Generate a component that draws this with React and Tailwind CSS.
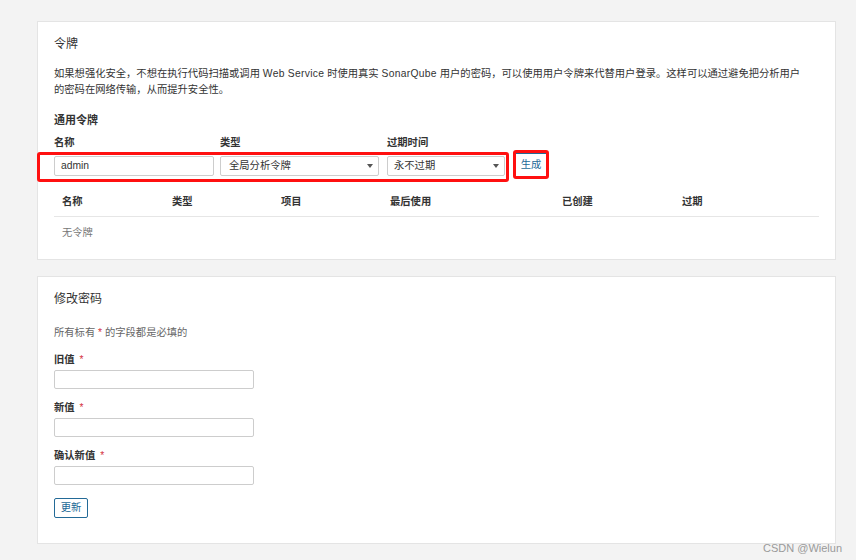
const font = { fontFamily: '"Liberation Sans", "Noto Sans CJK SC", sans-serif' };

function Caret() {
  return (
    <span className="ml-auto mr-[5px] h-0 w-0 border-x-[3px] border-t-[4px] border-x-transparent border-t-[#555]" />
  );
}

function Field({ label }) {
  return (
    <div className="mt-[12px]">
      <div className="font-bold leading-[14px] text-[#333]">
        {label}
        <span className="ml-[5px] font-normal text-[#d4333f]">*</span>
      </div>
      <div className="mt-[3px] h-[19px] w-[200px] rounded-[2px] border border-[#cdcdcd] bg-white" />
    </div>
  );
}

export default function App() {
  const cols = ['名称', '类型', '项目', '最后使用', '已创建', '过期'];
  return (
    <div
      style={font}
      className="relative min-h-[560px] bg-[#f3f3f3] pl-[37px] pr-[20px] pt-[21px] text-[10.3px] text-[#333]"
    >
      {/* token card */}
      <div className="border border-[#e4e4e4] bg-white px-4 pb-[19px] pt-[14px]">
        <h2 className="text-[12px] leading-[16px] text-[#333]">令牌</h2>
        <p className="mt-[14px] leading-[16px]">
          如果想强化安全，不想在执行代码扫描或调用 <span className="tracking-[0.3px]">Web Service</span> 时使用真实{' '}
          <span className="tracking-[0.3px]">SonarQube</span> 用户的密码，可以使用用户令牌来代替用户登录。这样可以通过避免把分析用户
          <br />
          的密码在网络传输，从而提升安全性。
        </p>
        <h3 className="mt-[14px] text-[11px] font-bold leading-[16px]">通用令牌</h3>

        <div className="mt-[8px] flex items-end">
          <div className="w-[160px]">
            <div className="font-bold leading-[14px]">名称</div>
            <div className="mt-[6px] flex h-[20px] items-center rounded-[2px] border border-[#cdcdcd] pl-[6px]">
              admin
            </div>
          </div>
          <div className="ml-[6px] w-[159px]">
            <div className="font-bold leading-[14px]">类型</div>
            <div className="mt-[6px] flex h-[20px] items-center rounded-[2px] border border-[#cdcdcd] pl-[8px]">
              全局分析令牌
              <Caret />
            </div>
          </div>
          <div className="ml-[8px] w-[118px]">
            <div className="font-bold leading-[14px]">过期时间</div>
            <div className="mt-[6px] flex h-[20px] items-center rounded-[2px] border border-[#cdcdcd] pl-[6px]">
              永不过期
              <Caret />
            </div>
          </div>
          <button className="mb-[-1px] ml-[9px] h-[24px] w-[34px] rounded-[2px] border border-[#236a97] bg-white text-[#236a97]">
            生成
          </button>
        </div>

        <div className="mt-[19px] grid grid-cols-[110px_109px_109px_172px_120px_1fr] border-b border-[#e6e6e6] pb-[7px] font-bold leading-[14px]">
          {cols.map((c) => (
            <div key={c} className="pl-2">
              {c}
            </div>
          ))}
        </div>
        <div className="pl-2 pt-[9px] leading-[14px] text-[#777]">无令牌</div>
      </div>

      {/* password card */}
      <div className="mt-[16px] border border-[#e4e4e4] bg-white px-4 pb-[25px] pt-[14px]">
        <h2 className="text-[12px] leading-[16px]">修改密码</h2>
        <p className="mt-[18px] leading-[16px] text-[#666]">
          所有标有 <span className="text-[#d4333f]">*</span> 的字段都是必填的
        </p>
        <Field label="旧值" />
        <Field label="新值" />
        <Field label="确认新值" />
        <button className="mt-[13px] h-[20px] w-[34px] rounded-[2px] border border-[#236a97] bg-white text-[#236a97]">
          更新
        </button>
      </div>

      {/* annotations */}
      <div className="pointer-events-none absolute left-[37px] top-[152px] h-[30px] w-[472px] rounded-[3px] border-[3px] border-[#ff1010]" />
      <div className="pointer-events-none absolute left-[513px] top-[150px] h-[29px] w-[36px] rounded-[3px] border-[3px] border-[#ff1010]" />
      <div className="absolute left-[763px] top-[540px] text-[11px] text-[#9a9a9a]">CSDN @Wielun</div>
    </div>
  );
}
